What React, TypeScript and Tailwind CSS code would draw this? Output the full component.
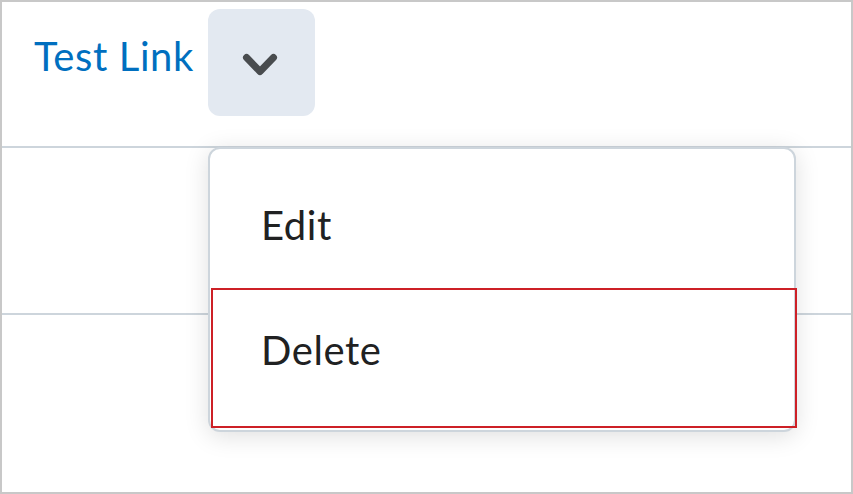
import React from 'react';

export default function App() {
    return (
        <div
            className="w-[853px] h-[494px] bg-white border-2 border-[#c8c8c8] flex flex-col overflow-hidden"
            style={{ fontFamily: 'Lato, "Open Sans", sans-serif' }}
        >
            {/* Ligne 1 : lien + bouton du menu */}
            <div className="h-[146px] border-b-2 border-[#cdd5dc] flex items-start pl-[32px] shrink-0">
                <a href="#" className="mt-[30px] text-[40px] leading-[48px] tracking-[0.6px] text-[#006fbf]">
                    Test Link
                </a>
                <div className="relative ml-[14px] mt-[7px]">
                    <button className="w-[107px] h-[107px] rounded-[12px] bg-[#e3e9f1] block">
                        <svg width="107" height="107" viewBox="0 0 107 107" fill="none">
                            <path
                                d="M38.5 48.5 L52 62.5 L65.5 48.5"
                                stroke="#494c4f"
                                strokeWidth="7"
                                strokeLinecap="round"
                                strokeLinejoin="round"
                            />
                        </svg>
                    </button>

                    {/* Menu déroulant */}
                    <div className="absolute left-0 top-[138px] w-[588px] h-[285px] bg-white border-2 border-[#cdd5dc] rounded-[12px] shadow-[0_4px_24px_rgba(0,0,0,0.13)] pt-[13px] z-10">
                        <div className="h-[125px] flex items-center pl-[51px] text-[40px] leading-[48px] tracking-[0.6px] text-[#202122]">
                            Edit
                        </div>
                        <div className="h-[125px] flex items-center pl-[51px] text-[40px] leading-[48px] tracking-[0.6px] text-[#202122]">
                            Delete
                        </div>
                        {/* Anneau de focus */}
                        <span className="absolute left-[1px] top-[139px] right-[-3px] bottom-[2px] border-2 border-[#cd2026] pointer-events-none" />
                    </div>
                </div>
            </div>

            {/* Ligne 2 */}
            <div className="h-[167px] border-b-2 border-[#cdd5dc] shrink-0" />

            {/* Ligne 3 */}
            <div className="flex-1" />
        </div>
    );
}
